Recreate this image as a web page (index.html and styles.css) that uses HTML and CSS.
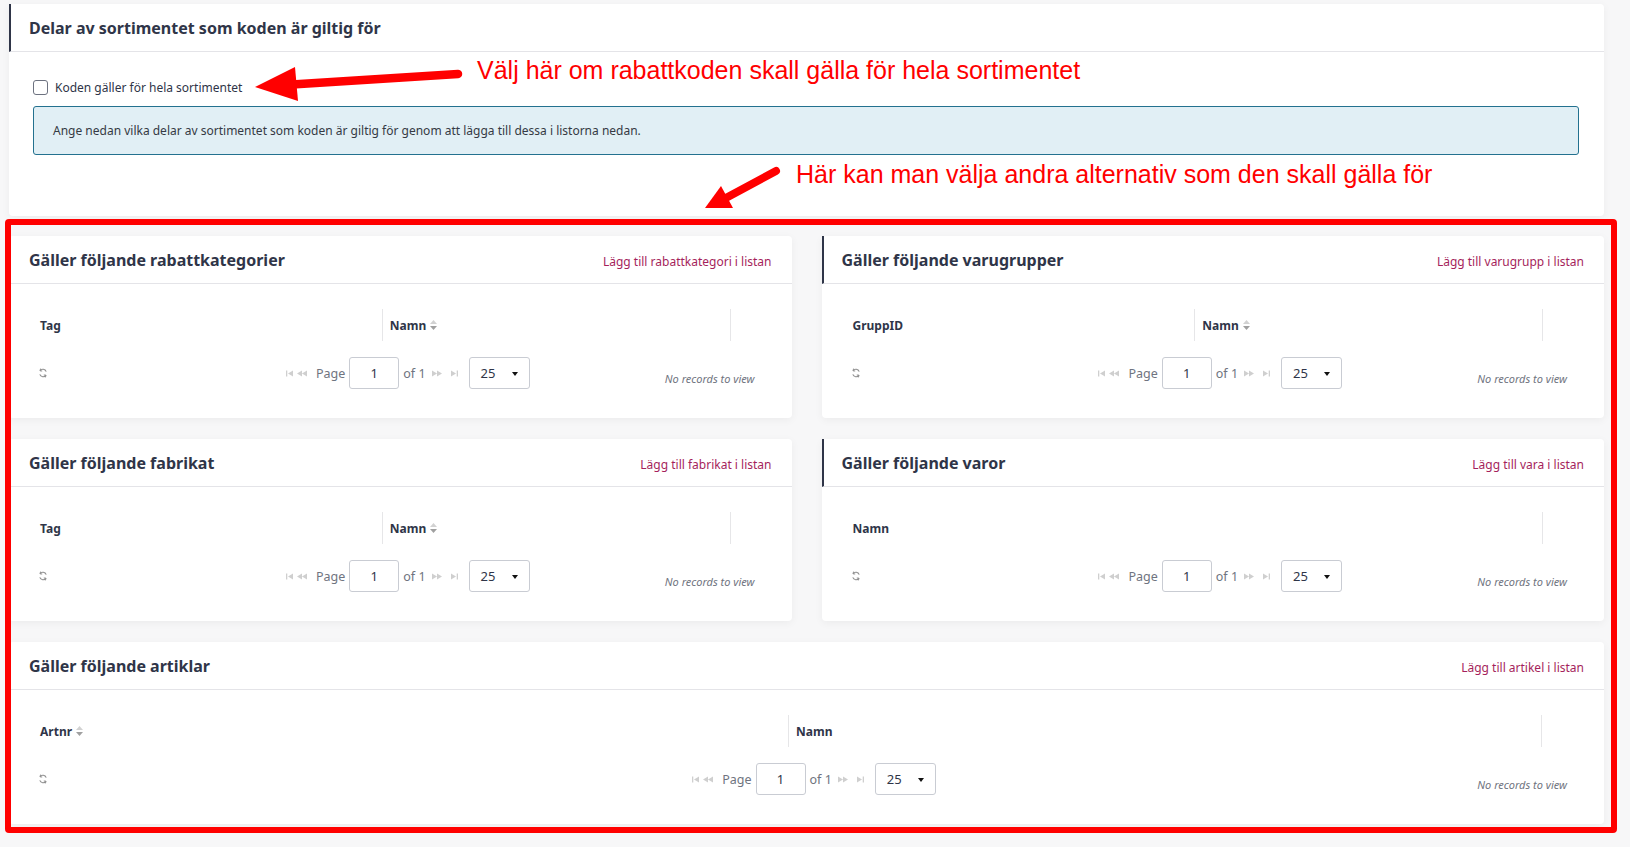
FILE: index.html
```html
<!DOCTYPE html>
<html lang="sv">
  <head>
    <meta charset="UTF-8">
    <meta name="viewport" content="width=device-width, initial-scale=1.0">
    <title>Rabattkod - sortiment</title>
    <link rel="stylesheet" href="styles.css">
  </head>
  <body>
    <div class="page">

      <!-- Delar av sortimentet -->
      <section class="card top-card">
        <div class="card-head">
          <h3>Delar av sortimentet som koden är giltig för</h3>
        </div>
        <div class="top-body">
          <label class="check-row">
            <input type="checkbox" class="check">
            <span>Koden gäller för hela sortimentet</span>
          </label>
          <div class="info">Ange nedan vilka delar av sortimentet som koden är giltig för genom att lägga till dessa i listorna nedan.</div>
        </div>
      </section>

      <!-- Listor -->
      <div class="card-grid">
        <section class="card">
          <div class="card-head">
            <h3>Gäller följande rabattkategorier</h3>
            <a href="#" class="add-link">Lägg till rabattkategori i listan</a>
          </div>
          <div class="card-body">
            <div class="grid-head">
              <div class="col">Tag</div>
              <div class="col sep">Namn <svg class="sort" viewBox="0 0 7 10"><path d="M0 4 L3.5 0 L7 4 Z" fill="#d2d2d2"/><path d="M0 6 L7 6 L3.5 10 Z" fill="#a0a0a0"/></svg></div>
              <div class="col sep"></div>
            </div>
            <div class="pager">
              <div class="pager-left"><svg class="refresh" viewBox="0 0 10 10"><path d="M8.2 3.6 A3.6 3.6 0 0 0 2 2.6 M1.8 6.4 A3.6 3.6 0 0 0 8 7.4" fill="none" stroke="#8f8f8f" stroke-width="1.1"/><path d="M2.6 0.6 L2 2.8 L4.2 3" fill="none" stroke="#8f8f8f" stroke-width="1"/><path d="M7.4 9.4 L8 7.2 L5.8 7" fill="none" stroke="#8f8f8f" stroke-width="1"/></svg></div>
              <div class="pager-center">
                <svg class="pg-ico" viewBox="0 0 8 7"><rect x="0" y="0.5" width="1.3" height="6" fill="#cfcfcf"/><path d="M7 0.5 L2 3.5 L7 6.5 Z" fill="#cfcfcf"/></svg>
                <svg class="pg-ico pg-gap" viewBox="0 0 10 7"><path d="M5 0.5 L0 3.5 L5 6.5 Z M10 0.5 L5 3.5 L10 6.5 Z" fill="#cfcfcf"/></svg>
                <span class="pg-text pg-page">Page</span>
                <input type="text" class="pg-input" value="1">
                <span class="pg-text pg-of">of 1</span>
                <svg class="pg-ico pg-next" viewBox="0 0 10 7"><path d="M0 0.5 L5 3.5 L0 6.5 Z M5 0.5 L10 3.5 L5 6.5 Z" fill="#cfcfcf"/></svg>
                <svg class="pg-ico pg-last" viewBox="0 0 8 7"><path d="M1 0.5 L6 3.5 L1 6.5 Z" fill="#cfcfcf"/><rect x="6.7" y="0.5" width="1.3" height="6" fill="#cfcfcf"/></svg>
                <div class="pg-select">25<span class="caret"></span></div>
              </div>
              <div class="pager-right">No records to view</div>
            </div>
          </div>
        </section>

        <section class="card">
          <div class="card-head">
            <h3>Gäller följande varugrupper</h3>
            <a href="#" class="add-link">Lägg till varugrupp i listan</a>
          </div>
          <div class="card-body">
            <div class="grid-head">
              <div class="col">GruppID</div>
              <div class="col sep">Namn <svg class="sort" viewBox="0 0 7 10"><path d="M0 4 L3.5 0 L7 4 Z" fill="#d2d2d2"/><path d="M0 6 L7 6 L3.5 10 Z" fill="#a0a0a0"/></svg></div>
              <div class="col sep"></div>
            </div>
            <div class="pager">
              <div class="pager-left"><svg class="refresh" viewBox="0 0 10 10"><path d="M8.2 3.6 A3.6 3.6 0 0 0 2 2.6 M1.8 6.4 A3.6 3.6 0 0 0 8 7.4" fill="none" stroke="#8f8f8f" stroke-width="1.1"/><path d="M2.6 0.6 L2 2.8 L4.2 3" fill="none" stroke="#8f8f8f" stroke-width="1"/><path d="M7.4 9.4 L8 7.2 L5.8 7" fill="none" stroke="#8f8f8f" stroke-width="1"/></svg></div>
              <div class="pager-center">
                <svg class="pg-ico" viewBox="0 0 8 7"><rect x="0" y="0.5" width="1.3" height="6" fill="#cfcfcf"/><path d="M7 0.5 L2 3.5 L7 6.5 Z" fill="#cfcfcf"/></svg>
                <svg class="pg-ico pg-gap" viewBox="0 0 10 7"><path d="M5 0.5 L0 3.5 L5 6.5 Z M10 0.5 L5 3.5 L10 6.5 Z" fill="#cfcfcf"/></svg>
                <span class="pg-text pg-page">Page</span>
                <input type="text" class="pg-input" value="1">
                <span class="pg-text pg-of">of 1</span>
                <svg class="pg-ico pg-next" viewBox="0 0 10 7"><path d="M0 0.5 L5 3.5 L0 6.5 Z M5 0.5 L10 3.5 L5 6.5 Z" fill="#cfcfcf"/></svg>
                <svg class="pg-ico pg-last" viewBox="0 0 8 7"><path d="M1 0.5 L6 3.5 L1 6.5 Z" fill="#cfcfcf"/><rect x="6.7" y="0.5" width="1.3" height="6" fill="#cfcfcf"/></svg>
                <div class="pg-select">25<span class="caret"></span></div>
              </div>
              <div class="pager-right">No records to view</div>
            </div>
          </div>
        </section>

        <section class="card">
          <div class="card-head">
            <h3>Gäller följande fabrikat</h3>
            <a href="#" class="add-link">Lägg till fabrikat i listan</a>
          </div>
          <div class="card-body">
            <div class="grid-head">
              <div class="col">Tag</div>
              <div class="col sep">Namn <svg class="sort" viewBox="0 0 7 10"><path d="M0 4 L3.5 0 L7 4 Z" fill="#d2d2d2"/><path d="M0 6 L7 6 L3.5 10 Z" fill="#a0a0a0"/></svg></div>
              <div class="col sep"></div>
            </div>
            <div class="pager">
              <div class="pager-left"><svg class="refresh" viewBox="0 0 10 10"><path d="M8.2 3.6 A3.6 3.6 0 0 0 2 2.6 M1.8 6.4 A3.6 3.6 0 0 0 8 7.4" fill="none" stroke="#8f8f8f" stroke-width="1.1"/><path d="M2.6 0.6 L2 2.8 L4.2 3" fill="none" stroke="#8f8f8f" stroke-width="1"/><path d="M7.4 9.4 L8 7.2 L5.8 7" fill="none" stroke="#8f8f8f" stroke-width="1"/></svg></div>
              <div class="pager-center">
                <svg class="pg-ico" viewBox="0 0 8 7"><rect x="0" y="0.5" width="1.3" height="6" fill="#cfcfcf"/><path d="M7 0.5 L2 3.5 L7 6.5 Z" fill="#cfcfcf"/></svg>
                <svg class="pg-ico pg-gap" viewBox="0 0 10 7"><path d="M5 0.5 L0 3.5 L5 6.5 Z M10 0.5 L5 3.5 L10 6.5 Z" fill="#cfcfcf"/></svg>
                <span class="pg-text pg-page">Page</span>
                <input type="text" class="pg-input" value="1">
                <span class="pg-text pg-of">of 1</span>
                <svg class="pg-ico pg-next" viewBox="0 0 10 7"><path d="M0 0.5 L5 3.5 L0 6.5 Z M5 0.5 L10 3.5 L5 6.5 Z" fill="#cfcfcf"/></svg>
                <svg class="pg-ico pg-last" viewBox="0 0 8 7"><path d="M1 0.5 L6 3.5 L1 6.5 Z" fill="#cfcfcf"/><rect x="6.7" y="0.5" width="1.3" height="6" fill="#cfcfcf"/></svg>
                <div class="pg-select">25<span class="caret"></span></div>
              </div>
              <div class="pager-right">No records to view</div>
            </div>
          </div>
        </section>

        <section class="card">
          <div class="card-head">
            <h3>Gäller följande varor</h3>
            <a href="#" class="add-link">Lägg till vara i listan</a>
          </div>
          <div class="card-body">
            <div class="grid-head single">
              <div class="col">Namn</div>
              <div class="col sep"></div>
            </div>
            <div class="pager">
              <div class="pager-left"><svg class="refresh" viewBox="0 0 10 10"><path d="M8.2 3.6 A3.6 3.6 0 0 0 2 2.6 M1.8 6.4 A3.6 3.6 0 0 0 8 7.4" fill="none" stroke="#8f8f8f" stroke-width="1.1"/><path d="M2.6 0.6 L2 2.8 L4.2 3" fill="none" stroke="#8f8f8f" stroke-width="1"/><path d="M7.4 9.4 L8 7.2 L5.8 7" fill="none" stroke="#8f8f8f" stroke-width="1"/></svg></div>
              <div class="pager-center">
                <svg class="pg-ico" viewBox="0 0 8 7"><rect x="0" y="0.5" width="1.3" height="6" fill="#cfcfcf"/><path d="M7 0.5 L2 3.5 L7 6.5 Z" fill="#cfcfcf"/></svg>
                <svg class="pg-ico pg-gap" viewBox="0 0 10 7"><path d="M5 0.5 L0 3.5 L5 6.5 Z M10 0.5 L5 3.5 L10 6.5 Z" fill="#cfcfcf"/></svg>
                <span class="pg-text pg-page">Page</span>
                <input type="text" class="pg-input" value="1">
                <span class="pg-text pg-of">of 1</span>
                <svg class="pg-ico pg-next" viewBox="0 0 10 7"><path d="M0 0.5 L5 3.5 L0 6.5 Z M5 0.5 L10 3.5 L5 6.5 Z" fill="#cfcfcf"/></svg>
                <svg class="pg-ico pg-last" viewBox="0 0 8 7"><path d="M1 0.5 L6 3.5 L1 6.5 Z" fill="#cfcfcf"/><rect x="6.7" y="0.5" width="1.3" height="6" fill="#cfcfcf"/></svg>
                <div class="pg-select">25<span class="caret"></span></div>
              </div>
              <div class="pager-right">No records to view</div>
            </div>
          </div>
        </section>
      </div>

      <section class="card wide-card">
        <div class="card-head">
          <h3>Gäller följande artiklar</h3>
          <a href="#" class="add-link">Lägg till artikel i listan</a>
        </div>
        <div class="card-body">
          <div class="grid-head wide">
            <div class="col">Artnr <svg class="sort" viewBox="0 0 7 10"><path d="M0 4 L3.5 0 L7 4 Z" fill="#d2d2d2"/><path d="M0 6 L7 6 L3.5 10 Z" fill="#a0a0a0"/></svg></div>
            <div class="col sep">Namn</div>
            <div class="col sep"></div>
          </div>
          <div class="pager">
            <div class="pager-left"><svg class="refresh" viewBox="0 0 10 10"><path d="M8.2 3.6 A3.6 3.6 0 0 0 2 2.6 M1.8 6.4 A3.6 3.6 0 0 0 8 7.4" fill="none" stroke="#8f8f8f" stroke-width="1.1"/><path d="M2.6 0.6 L2 2.8 L4.2 3" fill="none" stroke="#8f8f8f" stroke-width="1"/><path d="M7.4 9.4 L8 7.2 L5.8 7" fill="none" stroke="#8f8f8f" stroke-width="1"/></svg></div>
            <div class="pager-center">
              <svg class="pg-ico" viewBox="0 0 8 7"><rect x="0" y="0.5" width="1.3" height="6" fill="#cfcfcf"/><path d="M7 0.5 L2 3.5 L7 6.5 Z" fill="#cfcfcf"/></svg>
              <svg class="pg-ico pg-gap" viewBox="0 0 10 7"><path d="M5 0.5 L0 3.5 L5 6.5 Z M10 0.5 L5 3.5 L10 6.5 Z" fill="#cfcfcf"/></svg>
              <span class="pg-text pg-page">Page</span>
              <input type="text" class="pg-input" value="1">
              <span class="pg-text pg-of">of 1</span>
              <svg class="pg-ico pg-next" viewBox="0 0 10 7"><path d="M0 0.5 L5 3.5 L0 6.5 Z M5 0.5 L10 3.5 L5 6.5 Z" fill="#cfcfcf"/></svg>
              <svg class="pg-ico pg-last" viewBox="0 0 8 7"><path d="M1 0.5 L6 3.5 L1 6.5 Z" fill="#cfcfcf"/><rect x="6.7" y="0.5" width="1.3" height="6" fill="#cfcfcf"/></svg>
              <div class="pg-select">25<span class="caret"></span></div>
            </div>
            <div class="pager-right">No records to view</div>
          </div>
        </div>
      </section>

      <!-- Annotations (red box, arrows, notes) drawn over the page -->
      <div class="annot-box"></div>
      <svg class="annot-arrows" viewBox="0 0 1630 847" width="1630" height="847">
        <line x1="458" y1="74" x2="292" y2="84.5" stroke="#ff0000" stroke-width="8.5" stroke-linecap="round"/>
        <polygon points="255,87 295,67 298,101" fill="#ff0000"/>
        <line x1="776" y1="171" x2="724" y2="199" stroke="#ff0000" stroke-width="8" stroke-linecap="round"/>
        <polygon points="705,208 721,186 733,208" fill="#ff0000"/>
      </svg>
      <p class="note note-one">Välj här om rabattkoden skall gälla för hela sortimentet</p>
      <p class="note note-two">Här kan man välja andra alternativ som den skall gälla för</p>
    </div>
  </body>
</html>
```

FILE: styles.css
```css
/* Page */
body {
  margin: 0;
  background: #f7f7f8;
  font-family: "Noto Sans", "Open Sans", sans-serif;
  color: #2f3548;
}

.page {
  position: relative;
  padding: 4px 26px 0 9px;
  min-height: 843px;
}

/* Cards */
.card {
  background: #fff;
  border-radius: 4px;
  box-shadow: 0 2px 8px rgba(0, 0, 0, 0.05);
}

.card-head {
  height: 47px;
  border-bottom: 1px solid #e4e4e8;
  border-left: 2px solid #2f3548;
  padding: 0 20px 0 18px;
  display: flex;
  align-items: center;
  justify-content: space-between;
}

.card-head h3 {
  margin: 0;
  padding-top: 1px;
  font-size: 16px;
  font-weight: 700;
  color: #2f3548;
}

.add-link {
  padding-top: 3px;
  font-size: 12px;
  color: #a51f5c;
  text-decoration: none;
}

/* Top card */
.top-card {
  margin-bottom: 20px;
}

.top-body {
  padding: 25px 25px 61px 24px;
}

.check-row {
  display: flex;
  align-items: center;
  height: 20px;
  font-size: 12px;
  color: #2f3548;
}

.check {
  appearance: none;
  -webkit-appearance: none;
  width: 15px;
  height: 15px;
  margin: 0 7px 0 0;
  border: 1px solid #6d7280;
  border-radius: 3px;
  background: #fff;
}

.info {
  margin-top: 9px;
  padding: 15px 19px;
  line-height: 17px;
  font-size: 12px;
  color: #353a44;
  background: #e1eff5;
  border: 1px solid #23718f;
  border-radius: 3px;
}

/* Grid cards */
.card-grid {
  display: grid;
  grid-template-columns: 1fr 1fr;
  column-gap: 30px;
  row-gap: 21px;
  margin-bottom: 21px;
}

.card-body {
  padding: 25px 20px 21px 20px;
}

.grid-head {
  display: grid;
  grid-template-columns: 1.015fr 1fr 42px;
  height: 32px;
}

.grid-head.single {
  grid-template-columns: 1fr 42px;
}

.grid-head.wide {
  grid-template-columns: 1.008fr 1fr 43px;
}

.col {
  display: flex;
  align-items: center;
  padding-left: 11px;
  font-size: 12px;
  font-weight: 700;
  color: #2f3548;
}

.col.sep {
  border-left: 1px solid #e6e6e8;
  padding-left: 7px;
}

.sort {
  width: 7px;
  height: 10px;
  margin-left: 4px;
}

/* Pager */
.pager {
  display: grid;
  grid-template-columns: 1fr auto 1fr;
  align-items: center;
  height: 48px;
  margin-top: 8px;
}

.pager-left {
  padding-left: 9px;
  display: flex;
  align-items: center;
}

.refresh {
  width: 10px;
  height: 10px;
}

.pager-center {
  display: flex;
  align-items: center;
  padding-left: 15px;
}

.pg-ico {
  height: 7px;
  width: 8px;
}

.pg-gap {
  width: 10px;
  margin-left: 3px;
}

.pg-text {
  font-size: 12.5px;
  color: #6f7480;
}

.pg-page {
  margin-left: 9px;
  margin-right: 4px;
}

.pg-input {
  width: 50px;
  height: 32px;
  box-sizing: border-box;
  border: 1px solid #c9ccd3;
  border-radius: 3px;
  text-align: center;
  font-family: inherit;
  font-size: 13px;
  color: #2f3548;
  padding: 0;
}

.pg-of {
  margin-left: 4px;
}

.pg-next {
  width: 10px;
  margin-left: 6px;
}

.pg-last {
  margin-left: 8px;
}

.pg-select {
  position: relative;
  width: 61px;
  height: 32px;
  box-sizing: border-box;
  margin-left: 11px;
  padding-left: 11px;
  border: 1px solid #c9ccd3;
  border-radius: 3px;
  display: flex;
  align-items: center;
  font-size: 13px;
  color: #2f3548;
}

.caret {
  position: absolute;
  right: 11px;
  top: 14px;
  border-left: 3.5px solid transparent;
  border-right: 3.5px solid transparent;
  border-top: 4px solid #111;
}

.pager-right {
  text-align: right;
  padding-right: 17px;
  padding-top: 10px;
  font-size: 11px;
  font-style: italic;
  color: #6f7480;
}

/* Annotations */
.annot-box {
  position: absolute;
  left: 5px;
  top: 219px;
  width: 1612px;
  height: 614px;
  box-sizing: border-box;
  border: 6px solid #ff0000;
  border-radius: 4px;
  pointer-events: none;
}

.annot-arrows {
  position: absolute;
  left: 0;
  top: 0;
  pointer-events: none;
}

.note {
  position: absolute;
  margin: 0;
  font-family: "Liberation Sans", Arial, sans-serif;
  font-size: 25px;
  line-height: 1;
  color: #ff0000;
  white-space: nowrap;
}

.note-one {
  left: 477px;
  top: 58px;
}

.note-two {
  left: 796px;
  top: 162px;
}
```
